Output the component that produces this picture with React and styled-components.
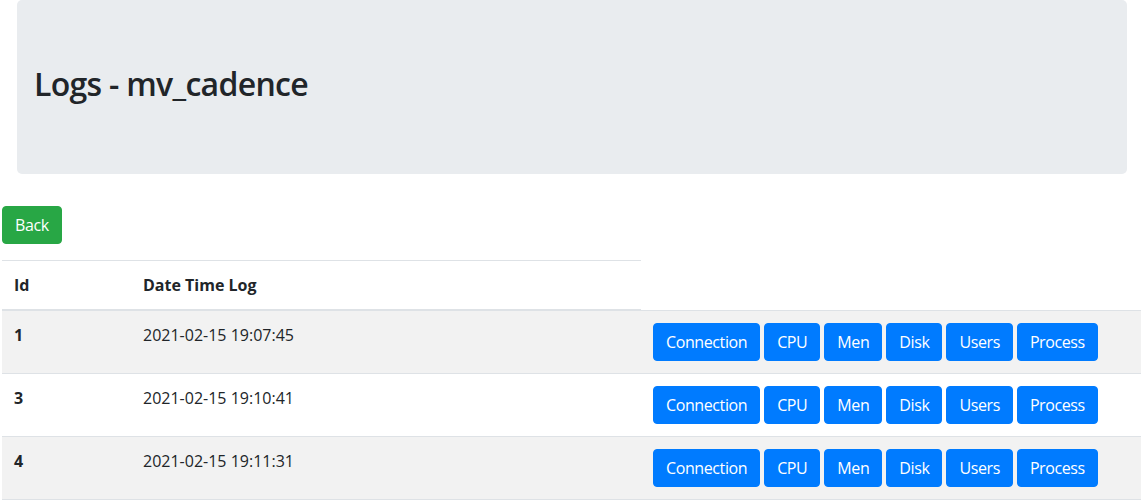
import React from 'react';
import styled, { createGlobalStyle } from 'styled-components';

const GlobalStyle = createGlobalStyle`
    * { box-sizing: border-box; }
    body {
        margin: 0;
        background: #fff;
        color: #212529;
        font-family: "Open Sans", "Noto Sans", Arial, sans-serif;
        font-size: 16px;
        line-height: 1.5;
    }
`;

const logs = [
    { id: 1, date: '2021-02-15 19:07:45' },
    { id: 3, date: '2021-02-15 19:10:41' },
    { id: 4, date: '2021-02-15 19:11:31' },
];

const actions = ['Connection', 'CPU', 'Men', 'Disk', 'Users', 'Process'];

function App() {
    return (
        <>
            <GlobalStyle />
            <Page>
                <Jumbotron>
                    <h1>Logs - mv_cadence</h1>
                </Jumbotron>
                <Button $variant="success">Back</Button>
                <Table>
                    <thead>
                        <tr>
                            <th style={{ width: 129 }}>Id</th>
                            <th style={{ width: 510 }}>Date Time Log</th>
                        </tr>
                    </thead>
                    <tbody>
                        {logs.map((log) => (
                            <tr key={log.id}>
                                <th scope="row">{log.id}</th>
                                <td>{log.date}</td>
                                <td>
                                    <ButtonGroup>
                                        {actions.map((a) => (
                                            <Button key={a} $variant="primary">{a}</Button>
                                        ))}
                                    </ButtonGroup>
                                </td>
                            </tr>
                        ))}
                    </tbody>
                </Table>
            </Page>
        </>
    );
}

const Page = styled.div`
    padding: 0 4px 0 2px;
`;

const Jumbotron = styled.div`
    margin: 0 15px 32px;
    height: 174px;
    padding: 65px 17px 0;
    background: #e9ecef;
    border-radius: 5px;

    h1 {
        margin: 0;
        font-size: 32px;
        font-weight: 600;
        line-height: 1.2;
        letter-spacing: -0.7px;
        color: #212529;
    }
`;

const Button = styled.button`
    display: inline-block;
    padding: 6px 12px;
    font-family: inherit;
    font-size: 16px;
    line-height: 1.5;
    letter-spacing: -0.4px;
    color: #fff;
    background: ${(p) => (p.$variant === 'success' ? '#28a745' : '#007bff')};
    border: 1px solid ${(p) => (p.$variant === 'success' ? '#28a745' : '#007bff')};
    border-radius: 4px;
    cursor: pointer;
`;

const ButtonGroup = styled.div`
    display: flex;
    gap: 4px;
`;

const Table = styled.table`
    width: 1139px;
    margin-top: 16px;
    border-collapse: collapse;

    th, td {
        padding: 12px;
        text-align: left;
        vertical-align: top;
        border-top: 1px solid #dee2e6;
    }

    th {
        font-weight: 700;
    }

    thead th {
        border-bottom: 2px solid #dee2e6;
        vertical-align: bottom;
    }

    tbody tr:nth-of-type(odd) {
        background: #f2f2f2;
    }

    tbody tr:last-child th,
    tbody tr:last-child td {
        border-bottom: 1px solid #dee2e6;
    }
`;

export default App;
